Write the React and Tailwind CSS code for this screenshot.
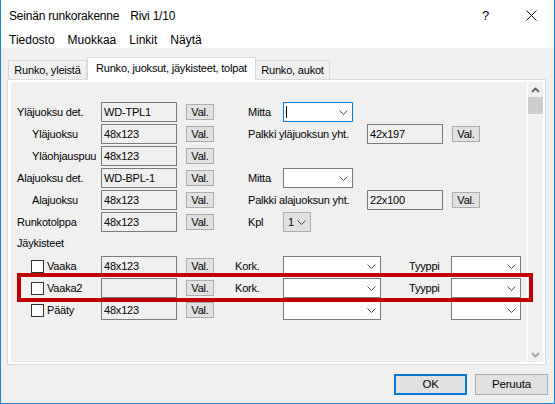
import React from "react";

const font = "font-['Liberation_Sans',Arial,sans-serif]";

// small combobox chevron
function Chevron({ color = "#4d4d4d" }) {
  return (
    <svg width="9" height="5" viewBox="0 0 9 5" className="shrink-0">
      <polyline points="0.5,0.5 4.5,4.5 8.5,0.5" fill="none" stroke={color} strokeWidth="1" />
    </svg>
  );
}

function Box({ w = "w-[76px]", children }) {
  return (
    <div className={`${w} h-[20px] shrink-0 border border-[#7a7a7a] bg-[#f0f0f0] flex items-center pl-[2px] text-black`}>
      {children}
    </div>
  );
}

function Val() {
  return (
    <div className="ml-[9px] w-[28px] h-[16px] shrink-0 border border-[#adadad] bg-[#e1e1e1] flex items-center justify-center">
      Val.
    </div>
  );
}

function Combo({ w = "w-[70px]", focused = false }) {
  return (
    <div
      className={`${w} h-[20px] shrink-0 border bg-white flex items-center pr-[4px] ${
        focused ? "border-[#0078d7]" : "border-[#7a7a7a]"
      }`}
    >
      <div className="flex-1 pl-[2px] flex items-center">
        {focused && <div className="w-px h-[12px] bg-black" />}
      </div>
      <Chevron />
    </div>
  );
}

function TopRow({ label, indent, value, right }) {
  return (
    <div className="flex items-center h-[20px]">
      <div className={`w-[84px] shrink-0 ${indent ? "pl-[15px]" : ""}`}>{label}</div>
      <Box>{value}</Box>
      <Val />
      <div className="ml-[34px] flex items-center">{right}</div>
    </div>
  );
}

function BraceRow({ label, value, kork, tyyppi }) {
  return (
    <div className="flex items-center h-[20px]">
      <div className="w-[84px] shrink-0 flex items-center pl-[14px]">
        <div className="w-[13px] h-[13px] border border-[#333] bg-white shrink-0" />
        <span className="ml-[3px]">{label}</span>
      </div>
      <Box>{value}</Box>
      <Val />
      <div className="ml-[21px] w-[48px] shrink-0">{kork}</div>
      <Combo w="w-[98px]" />
      <div className="ml-[28px] w-[42px] shrink-0">{tyyppi}</div>
      <Combo w="w-[70px]" />
    </div>
  );
}

export default function App() {
  return (
    <div className={`${font} relative w-[555px] h-[404px] overflow-hidden bg-[#f0f0f0] border-l border-r border-b border-[#1883d7] text-black`}>
      {/* title bar */}
      <div className="h-[30px] bg-white flex items-center pl-[8px] pr-[17px] pt-px text-[12px] tracking-[-0.2px]">
        <span>Seinän runkorakenne</span>
        <span className="ml-[11px]">Rivi 1/10</span>
        <span className="ml-auto text-[13px]">?</span>
        <svg width="11" height="11" viewBox="0 0 11 11" className="ml-[37px]">
          <path d="M0.5 0.5 L10.5 10.5 M10.5 0.5 L0.5 10.5" stroke="#111" strokeWidth="1" />
        </svg>
      </div>

      {/* menu bar */}
      <div className="h-[18px] bg-white flex items-start pl-[8px] pt-[3px] gap-[13px] text-[12px] leading-[14px]">
        <span>Tiedosto</span>
        <span>Muokkaa</span>
        <span>Linkit</span>
        <span>Näytä</span>
      </div>

      {/* tabs */}
      <div className="text-[11px] tracking-[-0.2px] ml-[7px] mt-[9px] flex items-end h-[23px] relative z-10">
        <div className="w-[79px] h-[19px] mb-px border border-b-0 border-[#d9d9d9] bg-[#f0f0f0] flex items-center justify-center">
          Runko, yleistä
        </div>
        <div className="w-[169px] h-[23px] border border-b-0 border-[#d9d9d9] bg-white flex items-center justify-center pb-[2px]">
          Runko, juoksut, jäykisteet, tolpat
        </div>
        <div className="w-[74px] h-[19px] mb-px border border-b-0 border-l-0 border-[#d9d9d9] bg-[#f0f0f0] flex items-center justify-center">
          Runko, aukot
        </div>
      </div>

      {/* tab page */}
      <div className="ml-[6px] -mt-px w-[539px] h-[286px] border border-[#d9d9d9] bg-white pl-[3px] pt-[2px] pr-[2px] pb-[2px] flex">
        <div className="flex-1 bg-[#f0f0f0] pl-[6px] pt-[20px] text-[11px] tracking-[-0.2px]">
          <div className="flex flex-col gap-[2px]">
            <TopRow
              label="Yläjuoksu det."
              value="WD-TPL1"
              right={
                <>
                  <div className="w-[35px]">Mitta</div>
                  <Combo focused />
                </>
              }
            />
            <TopRow
              label="Yläjuoksu"
              indent
              value="48x123"
              right={
                <>
                  <div className="w-[119px]">Palkki yläjuoksun yht.</div>
                  <Box>42x197</Box>
                  <Val />
                </>
              }
            />
            <TopRow label="Yläohjauspuu" indent value="48x123" />
            <TopRow
              label="Alajuoksu det."
              value="WD-BPL-1"
              right={
                <>
                  <div className="w-[35px]">Mitta</div>
                  <Combo />
                </>
              }
            />
            <TopRow
              label="Alajuoksu"
              indent
              value="48x123"
              right={
                <>
                  <div className="w-[119px]">Palkki alajuoksun yht.</div>
                  <Box>22x100</Box>
                  <Val />
                </>
              }
            />
            <TopRow
              label="Runkotolppa"
              value="48x123"
              right={
                <>
                  <div className="w-[35px]">Kpl</div>
                  <div className="w-[28px] h-[20px] border border-[#adadad] bg-[#e1e1e1] flex items-center pl-[4px] pr-[4px] justify-between">
                    <span>1</span>
                    <Chevron />
                  </div>
                </>
              }
            />
          </div>

          <div className="h-[18px] mt-[2px] flex items-center">Jäykisteet</div>

          <div className="mt-[4px] flex flex-col gap-[2px]">
            <BraceRow label="Vaaka" value="48x123" kork="Kork." tyyppi="Tyyppi" />
            <BraceRow label="Vaaka2" value="" kork="Kork." tyyppi="Tyyppi" />
            <BraceRow label="Pääty" value="48x123" kork="" tyyppi="" />
          </div>
        </div>

        {/* scrollbar */}
        <div className="ml-px w-[15px] bg-[#f0f0f0] flex flex-col">
          <div className="h-[15px] flex items-center justify-center">
            <svg width="9" height="6" viewBox="0 0 9 6">
              <polyline points="1,5 4.5,1.5 8,5" fill="none" stroke="#606060" strokeWidth="1.8" />
            </svg>
          </div>
          <div className="h-[17px] bg-[#cdcdcd]" />
          <div className="flex-1" />
          <div className="h-[15px] flex items-center justify-center">
            <svg width="9" height="6" viewBox="0 0 9 6">
              <polyline points="1,1 4.5,4.5 8,1" fill="none" stroke="#a3a3a3" strokeWidth="1.8" />
            </svg>
          </div>
        </div>
      </div>

      {/* buttons */}
      <div className="mt-[9px] flex justify-end gap-[8px] pr-[6px] text-[11.5px] tracking-[-0.2px]">
        <div className="w-[73px] h-[21px] border-2 border-[#0078d7] bg-[#e1e1e1] flex items-center justify-center">
          OK
        </div>
        <div className="w-[73px] h-[21px] border border-[#adadad] bg-[#e1e1e1] flex items-center justify-center">
          Peruuta
        </div>
      </div>

      {/* highlight around the Vaaka2 row */}
      <div className="absolute left-[16px] top-[273px] w-[516px] h-[29px] border-4 border-[#c00000] pointer-events-none" />
    </div>
  );
}
